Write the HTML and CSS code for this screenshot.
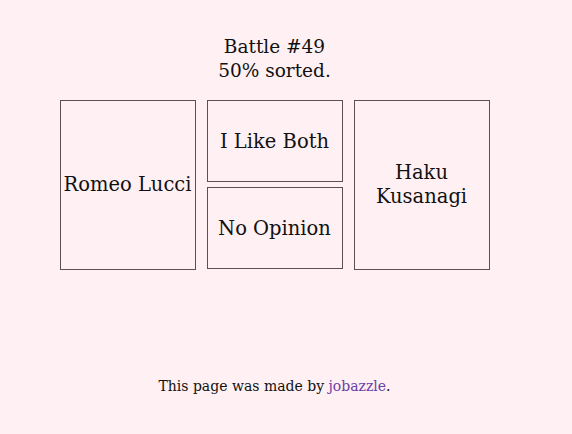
FILE: index.html
```html
<!DOCTYPE html>
<html>
<head>
<meta charset="utf-8">
<link rel="stylesheet" href="styles.css">
</head>
<body>
<div class="page">
  <div class="progress">
    <div class="battle">Battle #49</div>
    <div class="sorted">50% sorted.</div>
  </div>
  <div class="arena">
    <div class="card">Romeo Lucci</div>
    <div class="middle">
      <div class="choice">I Like Both</div>
      <div class="choice">No Opinion</div>
    </div>
    <div class="card">Haku<br>Kusanagi</div>
  </div>
  <div class="footer">This page was made by <a class="link" href="#">jobazzle</a>.</div>
</div>
</body>
</html>
```
FILE: styles.css
```css
html, body {
  margin: 0;
  padding: 0;
  background: #fff0f3;
}
body {
  font-family: "DejaVu Serif", serif;
  color: #111;
}
.page {
  width: 549px;
  padding-top: 35px;
}
.progress {
  text-align: center;
  font-size: 18.5px;
  line-height: 24px;
}
.arena {
  display: flex;
  justify-content: center;
  gap: 11px;
  margin-top: 17px;
}
.card {
  width: 134px;
  height: 168px;
  border: 1px solid #5e4f53;
  display: flex;
  align-items: center;
  justify-content: center;
  text-align: center;
  font-size: 19.5px;
  line-height: 24px;
}
.middle {
  display: flex;
  flex-direction: column;
  gap: 5px;
}
.choice {
  width: 134px;
  height: 80px;
  border: 1px solid #5e4f53;
  display: flex;
  align-items: center;
  justify-content: center;
  font-size: 19.5px;
}
.footer {
  text-align: center;
  font-size: 14px;
  margin-top: 108px;
}
.link {
  color: #6a3fa6;
  text-decoration: none;
}
```
